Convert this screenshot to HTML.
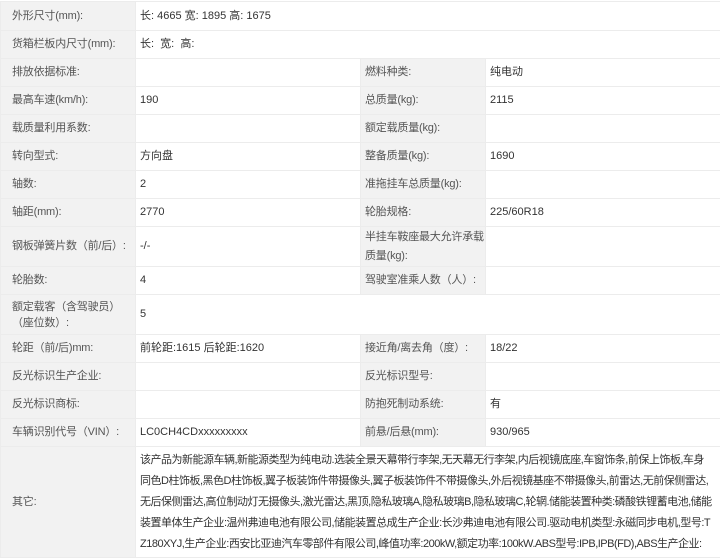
<!DOCTYPE html>
<html><head><meta charset="utf-8"><style>
body{margin:0;background:#fff;font-family:"Liberation Sans","Noto Sans CJK SC",sans-serif;font-size:11px;color:#333;overflow:hidden;height:527px}
table{border-collapse:collapse;width:720px;table-layout:fixed;margin-top:1px}
td{border:1px solid #ececec;padding:0 4px;vertical-align:middle;line-height:15px;white-space:nowrap}
td.l{background:#f2f2f2;color:#555;padding-left:11px;letter-spacing:-0.2px}
td.m{padding-left:4px}
tr{height:28px}
.t{height:40px}
.o td{line-height:21px;padding-top:3px;padding-bottom:2px;white-space:normal}
</style></head><body>
<table>
<col style="width:135px"><col style="width:225px"><col style="width:125px"><col style="width:235px">
<tr style="height:29px"><td class="l">外形尺寸(mm):</td><td colspan="3">长: 4665 宽: 1895 高: 1675</td></tr>
<tr><td class="l">货箱栏板内尺寸(mm):</td><td colspan="3">长:&nbsp; 宽:&nbsp; 高:</td></tr>
<tr><td class="l">排放依据标准:</td><td></td><td class="l m">燃料种类:</td><td>纯电动</td></tr>
<tr><td class="l">最高车速(km/h):</td><td>190</td><td class="l m">总质量(kg):</td><td>2115</td></tr>
<tr><td class="l">载质量利用系数:</td><td></td><td class="l m">额定载质量(kg):</td><td></td></tr>
<tr><td class="l">转向型式:</td><td>方向盘</td><td class="l m">整备质量(kg):</td><td>1690</td></tr>
<tr><td class="l">轴数:</td><td>2</td><td class="l m">准拖挂车总质量(kg):</td><td></td></tr>
<tr><td class="l">轴距(mm):</td><td>2770</td><td class="l m">轮胎规格:</td><td>225/60R18</td></tr>
<tr class="t"><td class="l">钢板弹簧片数（前/后）:</td><td>-/-</td><td class="l m" style="line-height:19px">半挂车鞍座最大允许承载<br>质量(kg):</td><td></td></tr>
<tr><td class="l">轮胎数:</td><td>4</td><td class="l m">驾驶室准乘人数（人）:</td><td></td></tr>
<tr class="t"><td class="l" style="line-height:16px">额定载客（含驾驶员）<br>（座位数）:</td><td colspan="3">5</td></tr>
<tr><td class="l">轮距（前/后)mm:</td><td>前轮距:1615 后轮距:1620</td><td class="l m">接近角/离去角（度）:</td><td>18/22</td></tr>
<tr><td class="l">反光标识生产企业:</td><td></td><td class="l m">反光标识型号:</td><td></td></tr>
<tr><td class="l">反光标识商标:</td><td></td><td class="l m">防抱死制动系统:</td><td>有</td></tr>
<tr><td class="l">车辆识别代号（VIN）:</td><td>LC0CH4CDxxxxxxxxx</td><td class="l m">前悬/后悬(mm):</td><td>930/965</td></tr>
<tr class="o" style="height:84px"><td class="l">其它:</td><td colspan="3" style="vertical-align:top;letter-spacing:-0.5px">该产品为新能源车辆,新能源类型为纯电动.选装全景天幕带行李架,无天幕无行李架,内后视镜底座,车窗饰条,前保上饰板,车身<br>同色D柱饰板,黑色D柱饰板,翼子板装饰件带摄像头,翼子板装饰件不带摄像头,外后视镜基座不带摄像头,前雷达,无前保侧雷达,<br>无后保侧雷达,高位制动灯无摄像头,激光雷达,黑顶,隐私玻璃A,隐私玻璃B,隐私玻璃C,轮辋.储能装置种类:磷酸铁锂蓄电池,储能<br>装置单体生产企业:温州弗迪电池有限公司,储能装置总成生产企业:长沙弗迪电池有限公司.驱动电机类型:永磁同步电机,型号:T<br>Z180XYJ,生产企业:西安比亚迪汽车零部件有限公司,峰值功率:200kW,额定功率:100kW.ABS型号:IPB,IPB(FD),ABS生产企业:</td></tr>
</table>
</body></html>
